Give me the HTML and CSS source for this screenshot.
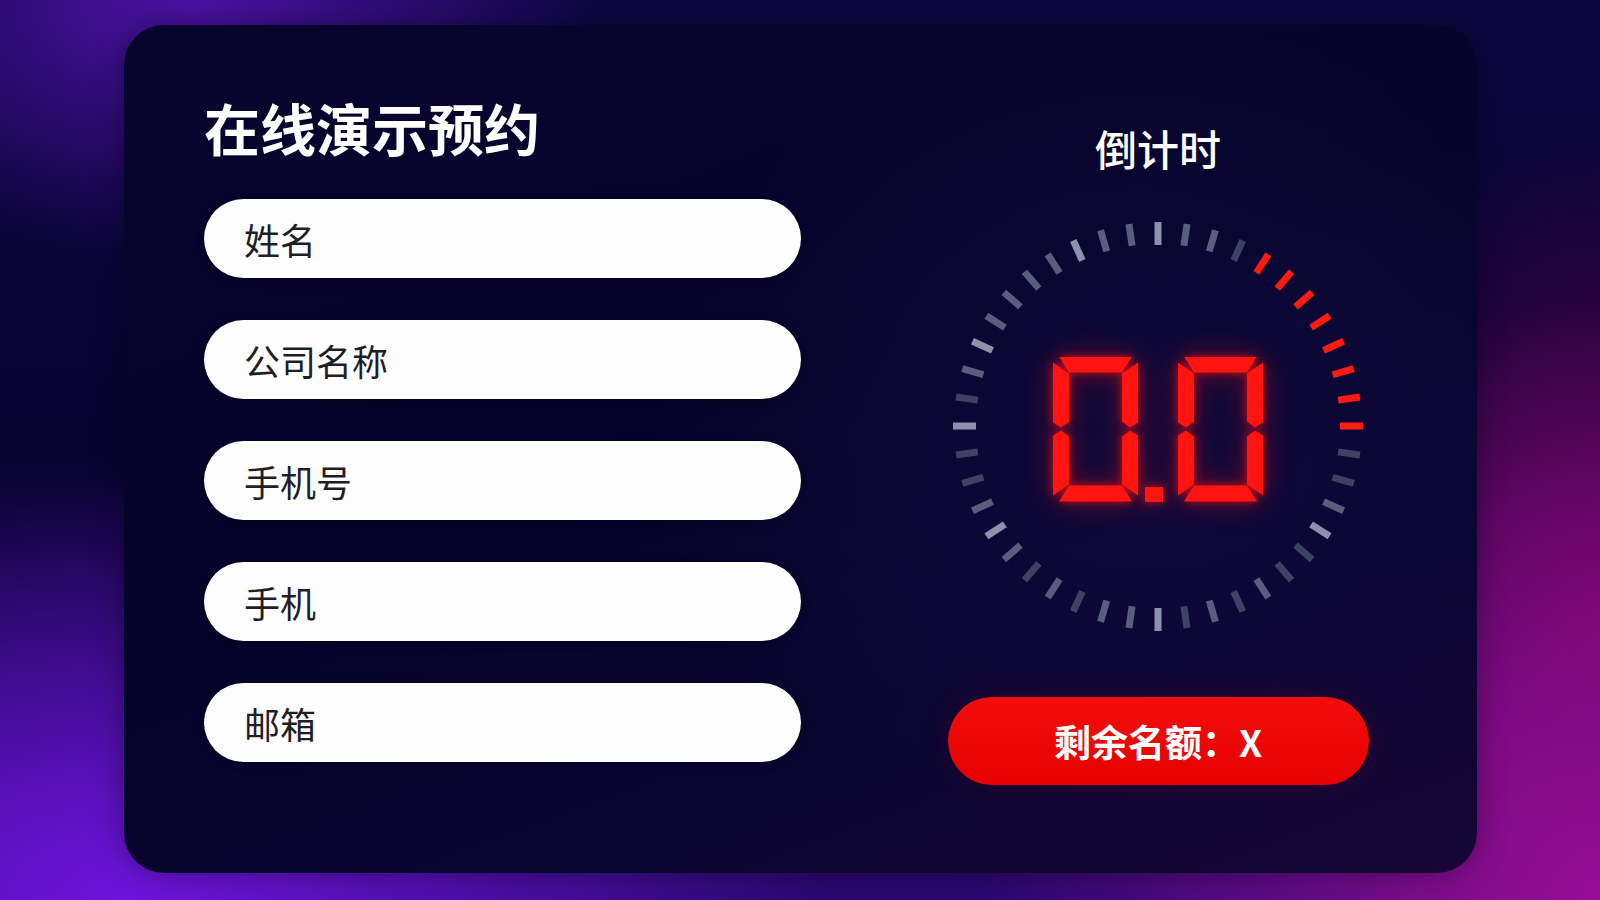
FILE: index.html
```html
<!DOCTYPE html>
<html lang="zh-CN">
<head>
<meta charset="utf-8">
<title>在线演示预约</title>
<link rel="stylesheet" href="styles.css">
</head>
<body>
<main class="card">
  <section class="form-col">
    <h1 class="title">在线演示预约</h1>
    <div class="fields">
      <div class="field"><span>姓名</span></div>
      <div class="field"><span>公司名称</span></div>
      <div class="field"><span>手机号</span></div>
      <div class="field"><span>手机</span></div>
      <div class="field"><span>邮箱</span></div>
    </div>
  </section>
  <section class="timer-col">
    <h2 class="timer-title">倒计时</h2>
    <div class="dial">
      <svg class="ticks" viewBox="-205 -205 410 410" width="410" height="410" aria-hidden="true">
        <g stroke-width="7">
          <line class="t3" x1="0" y1="-204" x2="0" y2="-181" transform="rotate(0)"/>
          <line class="t2" x1="0" y1="-204" x2="0" y2="-182" transform="rotate(8.18)"/>
          <line class="t2" x1="0" y1="-204" x2="0" y2="-182" transform="rotate(16.36)"/>
          <line class="t1" x1="0" y1="-204" x2="0" y2="-182" transform="rotate(24.55)"/>
          <line class="r" x1="0" y1="-204" x2="0" y2="-182" transform="rotate(32.73)"/>
          <line class="r" x1="0" y1="-204" x2="0" y2="-182" transform="rotate(40.91)"/>
          <line class="r" x1="0" y1="-204" x2="0" y2="-182" transform="rotate(49.09)"/>
          <line class="r" x1="0" y1="-204" x2="0" y2="-182" transform="rotate(57.27)"/>
          <line class="r" x1="0" y1="-204" x2="0" y2="-182" transform="rotate(65.45)"/>
          <line class="r" x1="0" y1="-204" x2="0" y2="-182" transform="rotate(73.64)"/>
          <line class="r" x1="0" y1="-204" x2="0" y2="-182" transform="rotate(81.82)"/>
          <line class="r" x1="0" y1="-206" x2="0" y2="-182" transform="rotate(90)"/>
          <line class="t1" x1="0" y1="-204" x2="0" y2="-182" transform="rotate(98.18)"/>
          <line class="t1" x1="0" y1="-204" x2="0" y2="-182" transform="rotate(106.36)"/>
          <line class="t2" x1="0" y1="-204" x2="0" y2="-182" transform="rotate(114.55)"/>
          <line class="t3" x1="0" y1="-204" x2="0" y2="-182" transform="rotate(122.73)"/>
          <line class="t1" x1="0" y1="-204" x2="0" y2="-182" transform="rotate(130.91)"/>
          <line class="t1" x1="0" y1="-204" x2="0" y2="-182" transform="rotate(139.09)"/>
          <line class="t2" x1="0" y1="-204" x2="0" y2="-182" transform="rotate(147.27)"/>
          <line class="t1" x1="0" y1="-204" x2="0" y2="-182" transform="rotate(155.45)"/>
          <line class="t2" x1="0" y1="-204" x2="0" y2="-182" transform="rotate(163.64)"/>
          <line class="t1" x1="0" y1="-204" x2="0" y2="-182" transform="rotate(171.82)"/>
          <line class="t3" x1="0" y1="-205" x2="0" y2="-182" transform="rotate(180)"/>
          <line class="t2" x1="0" y1="-204" x2="0" y2="-182" transform="rotate(188.18)"/>
          <line class="t2" x1="0" y1="-204" x2="0" y2="-182" transform="rotate(196.36)"/>
          <line class="t1" x1="0" y1="-204" x2="0" y2="-182" transform="rotate(204.55)"/>
          <line class="t2" x1="0" y1="-204" x2="0" y2="-182" transform="rotate(212.73)"/>
          <line class="t1" x1="0" y1="-204" x2="0" y2="-182" transform="rotate(220.91)"/>
          <line class="t2" x1="0" y1="-204" x2="0" y2="-182" transform="rotate(229.09)"/>
          <line class="t3" x1="0" y1="-204" x2="0" y2="-182" transform="rotate(237.27)"/>
          <line class="t2" x1="0" y1="-204" x2="0" y2="-182" transform="rotate(245.45)"/>
          <line class="t1" x1="0" y1="-204" x2="0" y2="-182" transform="rotate(253.64)"/>
          <line class="t1" x1="0" y1="-204" x2="0" y2="-182" transform="rotate(261.82)"/>
          <line class="t3" x1="0" y1="-205" x2="0" y2="-182" transform="rotate(270)"/>
          <line class="t1" x1="0" y1="-204" x2="0" y2="-182" transform="rotate(278.18)"/>
          <line class="t2" x1="0" y1="-204" x2="0" y2="-182" transform="rotate(286.36)"/>
          <line class="t3" x1="0" y1="-204" x2="0" y2="-182" transform="rotate(294.55)"/>
          <line class="t2" x1="0" y1="-204" x2="0" y2="-182" transform="rotate(302.73)"/>
          <line class="t2" x1="0" y1="-204" x2="0" y2="-182" transform="rotate(310.91)"/>
          <line class="t2" x1="0" y1="-204" x2="0" y2="-182" transform="rotate(319.09)"/>
          <line class="t2" x1="0" y1="-204" x2="0" y2="-182" transform="rotate(327.27)"/>
          <line class="t3" x1="0" y1="-204" x2="0" y2="-182" transform="rotate(335.45)"/>
          <line class="t2" x1="0" y1="-204" x2="0" y2="-182" transform="rotate(343.64)"/>
          <line class="t2" x1="0" y1="-204" x2="0" y2="-182" transform="rotate(351.82)"/>
        </g>
      </svg>
      <div class="led" role="img" aria-label="0.0">
        <div class="digit">
          <i class="seg a"></i><i class="seg b"></i><i class="seg c"></i>
          <i class="seg d"></i><i class="seg e"></i><i class="seg f"></i>
        </div>
        <div class="dot"></div>
        <div class="digit">
          <i class="seg a"></i><i class="seg b"></i><i class="seg c"></i>
          <i class="seg d"></i><i class="seg e"></i><i class="seg f"></i>
        </div>
      </div>
    </div>
    <div class="quota">剩余名额：X</div>
  </section>
</main>
</body>
</html>
```

FILE: styles.css
```css
* { box-sizing: border-box; }

html, body {
  margin: 0;
  width: 1600px;
  height: 900px;
  overflow: hidden;
}

body {
  font-family: "Noto Sans CJK SC", "Noto Sans", sans-serif;
  padding: 25px 123px 27px 124px;
  background:
    radial-gradient(ellipse 420px 260px at 12% 0%, rgba(80, 18, 170, 0.95), rgba(80, 18, 170, 0) 100%),
    radial-gradient(ellipse 700px 420px at 8% 100%, rgba(110, 20, 220, 1), rgba(110, 20, 220, 0) 100%),
    radial-gradient(ellipse 620px 600px at 100% 100%, rgba(150, 14, 150, 1), rgba(150, 14, 150, 0) 100%),
    radial-gradient(ellipse 300px 500px at 100% 70%, rgba(120, 0, 90, 0.8), rgba(120, 0, 90, 0) 100%),
    linear-gradient(180deg, #0b0640 0%, #07032f 50%, #2a0870 100%);
}

.card {
  width: 1353px;
  height: 848px;
  border-radius: 40px;
  background:
    radial-gradient(ellipse 500px 420px at 76% 48%, rgba(22, 14, 70, 0.55), rgba(22, 14, 70, 0) 100%),
    linear-gradient(160deg, #07042e 0%, #05032a 45%, #090430 75%, #170637 100%);
  box-shadow: 0 0 30px rgba(0, 0, 0, 0.35);
  padding: 70px 80px;
  display: grid;
  grid-template-columns: 597px 1fr;
  column-gap: 118px;
  align-items: start;
}

.title {
  margin: 0;
  font-size: 56px;
  line-height: 64px;
  font-weight: 700;
  color: #ffffff;
  letter-spacing: 0;
}

.fields {
  margin-top: 40px;
  display: flex;
  flex-direction: column;
  gap: 42px;
}

.field {
  height: 79px;
  border-radius: 40px;
  background: #fdfdfe;
  display: flex;
  align-items: center;
  padding-left: 40px;
  box-shadow: 0 2px 10px rgba(0, 0, 0, 0.25);
}

.field span {
  font-size: 36px;
  line-height: 1;
  color: #1e1e24;
  font-weight: 400;
}

.timer-col {
  display: flex;
  flex-direction: column;
  align-items: center;
  padding-top: 28px;
}

.timer-title {
  margin: 0;
  font-size: 42px;
  line-height: 50px;
  font-weight: 500;
  color: #ffffff;
}

.dial {
  margin-top: 48px;
  width: 410px;
  height: 410px;
  display: grid;
  place-items: center;
}

.dial > * {
  grid-area: 1 / 1;
}

.ticks { display: block; }

.t1 { stroke: #3f4264; }
.t2 { stroke: #5a5d7e; }
.t3 { stroke: #8e91ad; }
.r  { stroke: #ff1a12; }

.led {
  display: flex;
  align-items: flex-end;
  margin-top: 6px;
  filter: drop-shadow(0 0 5px rgba(255, 20, 20, 0.7)) drop-shadow(0 0 14px rgba(255, 0, 0, 0.35));
}

.digit {
  position: relative;
  width: 85px;
  height: 145px;
}

.seg {
  position: absolute;
  inset: 0;
  background: #ff1410;
}

.seg.a { clip-path: polygon(6px 0, 79px 0, 69px 16px, 16px 16px); }
.seg.b { clip-path: polygon(85px 6px, 85px 66px, 77px 71px, 69px 65px, 69px 17px); }
.seg.c { clip-path: polygon(85px 79px, 85px 139px, 69px 128px, 69px 80px, 77px 74px); }
.seg.d { clip-path: polygon(16px 129px, 69px 129px, 79px 145px, 6px 145px); }
.seg.e { clip-path: polygon(0 79px, 8px 74px, 16px 80px, 16px 128px, 0 139px); }
.seg.f { clip-path: polygon(0 6px, 16px 17px, 16px 65px, 8px 71px, 0 66px); }

.dot {
  width: 18px;
  height: 15px;
  margin: 0 15px 0 7px;
  background: #ff1410;
}

.quota {
  margin-top: 66px;
  width: 421px;
  height: 88px;
  border-radius: 44px;
  background: linear-gradient(180deg, #f50d0d 0%, #e60000 100%);
  box-shadow: 0 0 30px rgba(255, 0, 0, 0.12);
  color: #ffffff;
  font-size: 37px;
  font-weight: 700;
  display: flex;
  align-items: center;
  justify-content: center;
  letter-spacing: 0;
}
```
